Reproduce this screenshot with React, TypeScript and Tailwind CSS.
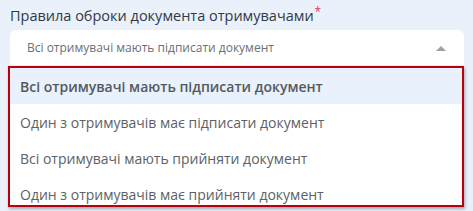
import React from "react";

const options = [
  "Всі отримувачі мають підписати документ",
  "Один з отримувачів має підписати документ",
  "Всі отримувачі мають прийняти документ",
  "Один з отримувачів має прийняти документ",
];

export default function App() {
  return (
    <div
      className="relative h-[211px] w-[473px] overflow-hidden bg-[#eaf1fb]"
      style={{ fontFamily: '"Open Sans", "Noto Sans", sans-serif' }}
    >
      <div className="pl-[10px] pr-[9px] pt-[5px]">
        <div className="flex items-start text-[14.5px] leading-[22px] text-[#2e3a48]">
          <span>Правила оброки документа отримувачами</span>
          <span className="-mt-[4px] ml-[1px] text-[12px] text-[#e8336a]">*</span>
        </div>
        <div className="relative mt-[3px]">
          <div className="flex h-[35px] items-center justify-between rounded-t-[6px] bg-white pl-[17px] pr-[18px] text-[12px] text-[#6b6f75]">
            <span>Всі отримувачі мають підписати документ</span>
            <svg width="10" height="6" viewBox="0 0 10 6" className="mt-[1px]">
              <path d="M0 6 L5 1 L10 6 Z" fill="#9aa0a6" />
            </svg>
          </div>
          <div className="absolute left-[-2px] right-0 top-[36px] z-10 h-[141px] overflow-hidden border-2 border-[#b8000e] bg-white shadow-[1px_2px_3px_rgba(0,0,0,0.3)]">
            {options.map((o, i) => (
              <div
                key={o}
                className={
                  i === 0
                    ? "flex h-[36px] items-center bg-[#e8f1fc] pl-[10px] text-[14px] font-semibold text-[#55595e]"
                    : "flex h-[36px] items-center pl-[10px] text-[14px] text-[#5d6166]"
                }
              >
                {o}
              </div>
            ))}
          </div>
        </div>
        <div className="mt-[146px] flex gap-[140px] pl-[2px] text-[14px] text-[#2e3a48]">
          <span>Дата підписання</span>
          <span>Термін дії</span>
        </div>
      </div>
    </div>
  );
}
